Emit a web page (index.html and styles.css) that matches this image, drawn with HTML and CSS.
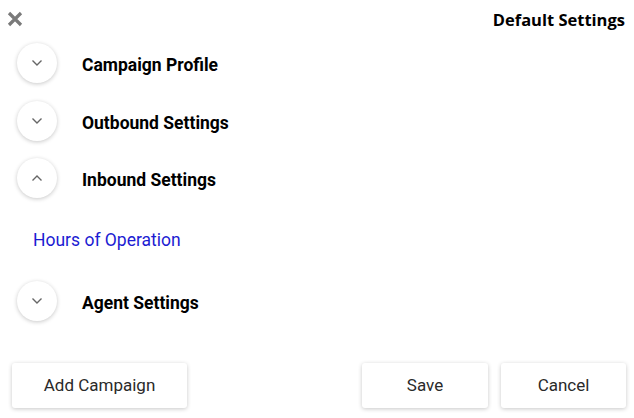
FILE: index.html
```html
<!DOCTYPE html>
<html>
<head>
<meta charset="utf-8">
<link rel="stylesheet" href="styles.css">
</head>
<body>
<div class="panel">
  <div class="header">
    <button class="close" aria-label="Close">
      <svg width="16" height="16" viewBox="0 0 16 16"><path d="M2 2 L14 14 M14 2 L2 14" stroke="#7a7a7a" stroke-width="3.2" stroke-linecap="butt"/></svg>
    </button>
    <div class="title">Default Settings</div>
  </div>
  <div class="sections">
    <div class="row">
      <span class="toggle"><svg width="12" height="8" viewBox="0 0 12 8"><path d="M1.5 1.5 L6 6 L10.5 1.5" fill="none" stroke="#666" stroke-width="1.4"/></svg></span>
      <span class="label">Campaign Profile</span>
    </div>
    <div class="row">
      <span class="toggle"><svg width="12" height="8" viewBox="0 0 12 8"><path d="M1.5 1.5 L6 6 L10.5 1.5" fill="none" stroke="#666" stroke-width="1.4"/></svg></span>
      <span class="label">Outbound Settings</span>
    </div>
    <div class="row">
      <span class="toggle"><svg width="12" height="8" viewBox="0 0 12 8"><path d="M1.5 6.5 L6 2 L10.5 6.5" fill="none" stroke="#666" stroke-width="1.4"/></svg></span>
      <span class="label">Inbound Settings</span>
    </div>
    <div class="sub"><a class="link">Hours of Operation</a></div>
    <div class="row">
      <span class="toggle"><svg width="12" height="8" viewBox="0 0 12 8"><path d="M1.5 1.5 L6 6 L10.5 1.5" fill="none" stroke="#666" stroke-width="1.4"/></svg></span>
      <span class="label">Agent Settings</span>
    </div>
  </div>
  <div class="footer">
    <button class="btn btn-add">Add Campaign</button>
    <div class="actions">
      <button class="btn btn-save">Save</button>
      <button class="btn btn-cancel">Cancel</button>
    </div>
  </div>
</div>
</body>
</html>
```
FILE: styles.css
```css
html, body {
  margin: 0;
  padding: 0;
  background: #fff;
}
body {
  font-family: Roboto, "Liberation Sans", sans-serif;
  color: #000;
}
.panel {
  width: 634px;
  height: 418px;
}
.header {
  display: flex;
  justify-content: space-between;
  align-items: flex-start;
  height: 43px;
}
.close {
  margin: 11px 0 0 7px;
  padding: 0;
  border: 0;
  background: none;
  width: 16px;
  height: 16px;
  display: block;
}
.close svg { display: block; }
.title {
  font-family: "Open Sans", "Noto Sans", sans-serif;
  font-weight: 700;
  font-size: 16.5px;
  line-height: 20px;
  margin: 10px 9px 0 0;
}
.sections {
  padding-left: 17px;
  display: flex;
  flex-direction: column;
}
.row {
  display: flex;
  align-items: center;
  height: 40px;
  margin-bottom: 17.5px;
}
.row:last-child { margin-bottom: 0; }
.toggle {
  width: 40px;
  height: 40px;
  border-radius: 50%;
  background: #fff;
  box-shadow: 0 1px 4px rgba(0,0,0,0.22);
  display: flex;
  align-items: center;
  justify-content: center;
  flex: none;
}
.toggle svg { display: block; }
.label {
  margin-left: 25px;
  font-size: 17.5px;
  font-weight: 700;
  line-height: 20px;
  margin-top: 4px;
}
.sub {
  margin-top: -17.5px;
  padding: 33px 0 31px 16px;
  line-height: 18px;
}
.link {
  font-size: 17.5px;
  color: #1c1cd2;
  cursor: pointer;
}
.footer {
  display: flex;
  justify-content: space-between;
  margin-top: 42px;
  padding: 0 8px 0 12px;
}
.actions {
  display: flex;
  gap: 13px;
}
.btn {
  font-family: Roboto, "Liberation Sans", sans-serif;
  font-size: 17px;
  color: #2a2a2a;
  background: #fff;
  border: 0;
  border-radius: 3px;
  height: 45px;
  box-shadow: 0 1px 4px rgba(0,0,0,0.22);
  padding: 0 0 2px 0;
}
.btn-add { width: 175px; }
.btn-save { width: 126px; }
.btn-cancel { width: 125px; }
```
